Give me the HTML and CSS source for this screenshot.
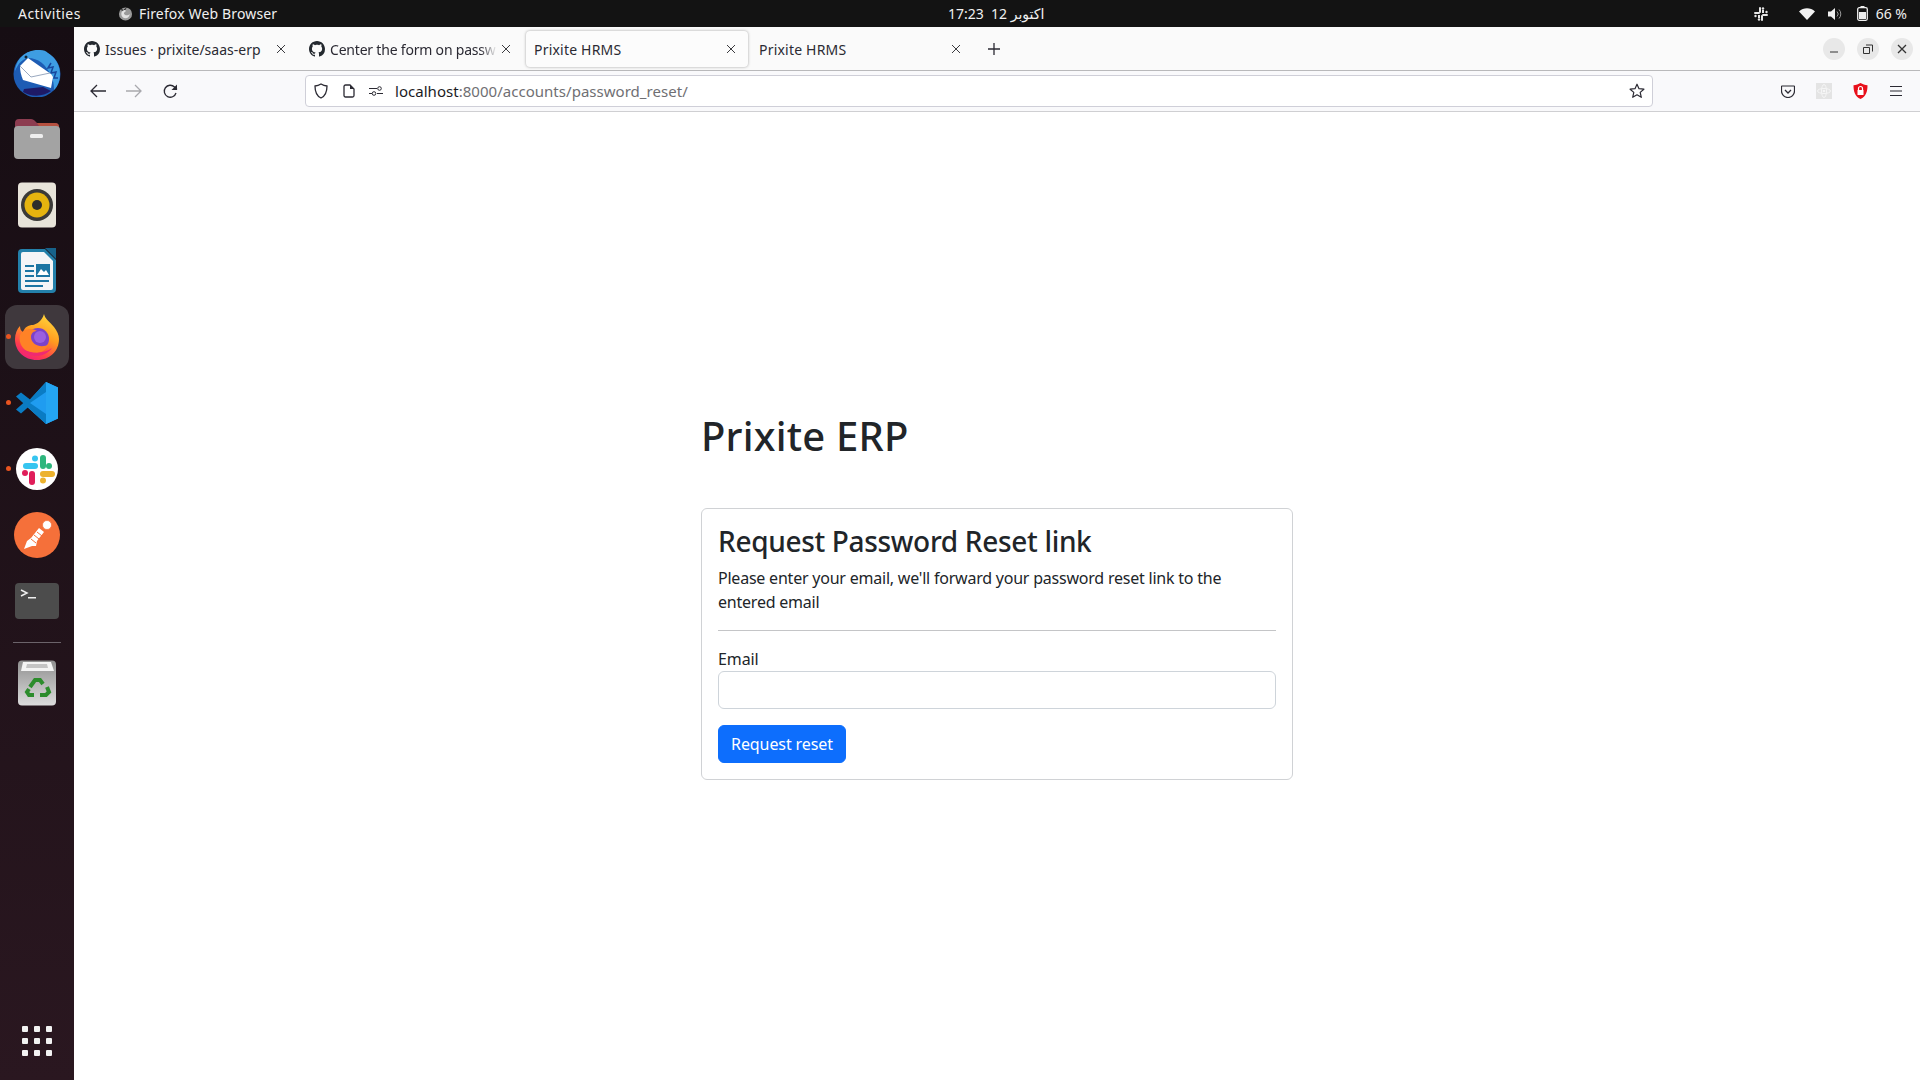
FILE: index.html
```html
<!DOCTYPE html>
<html lang="en">
<head>
<meta charset="utf-8">
<title>Prixite HRMS</title>
<link rel="stylesheet" href="styles.css">
</head>
<body>
<svg class="defs" width="0" height="0" aria-hidden="true">
  <symbol id="gh" viewBox="0 0 16 16"><path fill="#24292f" d="M8 0C3.58 0 0 3.58 0 8c0 3.54 2.29 6.53 5.47 7.59.4.07.55-.17.55-.38 0-.19-.01-.82-.01-1.49-2.01.37-2.53-.49-2.69-.94-.09-.23-.48-.94-.82-1.13-.28-.15-.68-.52-.01-.53.63-.01 1.08.58 1.23.82.72 1.21 1.87.87 2.33.66.07-.52.28-.87.51-1.07-1.78-.2-3.64-.89-3.64-3.95 0-.87.31-1.59.82-2.15-.08-.2-.36-1.02.08-2.12 0 0 .67-.21 2.2.82.64-.18 1.32-.27 2-.27s1.36.09 2 .27c1.53-1.04 2.2-.82 2.2-.82.44 1.1.16 1.92.08 2.12.51.56.82 1.27.82 2.15 0 3.07-1.87 3.75-3.65 3.95.29.25.54.73.54 1.48 0 1.07-.01 1.93-.01 2.2 0 .21.15.46.55.38A8.01 8.01 0 0 0 16 8c0-4.42-3.58-8-8-8z"/></symbol>
  <symbol id="x" viewBox="0 0 10 10"><path d="M1 1l8 8M9 1l-8 8" stroke="#3b3b3f" stroke-width="1" fill="none"/></symbol>
</svg>

<header class="topbar">
  <div class="top-left">
    <span class="top-activities">Activities</span>
    <svg class="top-fx" width="15" height="15" viewBox="0 0 16 16"><circle cx="8" cy="8.500" r="7" fill="#9a9a9a"/><path d="M8 4a4.500 4.500 0 1 0 4.500 4.500C11 10 8 10.500 6.500 8.500 6 7 7 6 8 6z" fill="#e2e2e2"/><path d="M3 1.500l2.500 3 3-2.500L10 0 8 4 4 5z" fill="#131313"/></svg>
    <span class="top-app">Firefox Web Browser</span>
  </div>
  <div class="top-clock">17:23&nbsp;&nbsp;12 اكتوبر</div>
  <div class="top-right">
    <svg class="st-slack" width="14" height="14" viewBox="0 0 14 14" fill="#e6e6e6"><rect x="0" y="5" width="6" height="2" rx="1"/><rect x="8" y="7" width="6" height="2" rx="1"/><rect x="5" y="0" width="2" height="6" rx="1"/><rect x="7" y="8" width="2" height="6" rx="1"/><circle cx="9" cy="1.500" r="1.200"/><circle cx="12.500" cy="5" r="1.200"/><circle cx="5" cy="12.500" r="1.200"/><circle cx="1.500" cy="9" r="1.200"/><rect x="8" y="3" width="2" height="3"/><rect x="4" y="8" width="2" height="3"/></svg>
    <svg class="st-wifi" width="16" height="12" viewBox="0 0 16 12"><path d="M8 12L0 3.500C4.500-.8 11.500-.8 16 3.500z" fill="#f2f2f2"/></svg>
    <svg class="st-vol" width="15" height="14" viewBox="0 0 15 14"><path d="M0 4.500h3L7 1v12L3 9.500H0z" fill="#f0f0f0"/><path d="M9 4.500a3.500 3.500 0 0 1 0 5M11 2.500a6.500 6.500 0 0 1 0 9" stroke="#9a9a9a" stroke-width="1" fill="none"/></svg>
    <svg class="st-bat" width="11" height="15" viewBox="0 0 11 15"><rect x="3.500" y="0" width="4" height="2" fill="#eee"/><rect x=".7" y="1.700" width="9.600" height="12.600" rx="1.500" fill="none" stroke="#eee" stroke-width="1.300"/><rect x="2" y="6" width="7" height="7" fill="#eee"/></svg>
    <span class="st-pct">66 %</span>
  </div>
</header>

<div class="desktop">
  <nav class="dock">
    <div class="dock-slot">
      <svg width="48" height="48" viewBox="0 0 48 48"><circle cx="24" cy="25" r="23.500" fill="#1d5cb4"/><path d="M2 22C3 10 13 0 27 1c4 .3 6 1 8 3 7 4 12 12 12 21 0 6-2 12-6 16 0-6-1-11-3-14C33 15 25 9 15 9 9 10 5 15 2 22z" fill="#3e9de2"/><path d="M38 14l-3 5 5-1-2 6 5-1-2 6 4 0" fill="none" stroke="#17479d" stroke-width="1.500"/><path d="M10 43c8 5 20 5 28-1l-8-4-19 2z" fill="#1e1a66"/><path d="M7 17l8-8 23 16 2 3-2 11-28-8c-2-5-3-9-3-14z" fill="#fff"/><path d="M7 17l11 11 19-4" fill="none" stroke="#9aa9c0" stroke-width="1"/><circle cx="13" cy="8" r="1.500" fill="#123"/></svg>
    </div>
    <div class="dock-slot">
      <svg width="46" height="42" viewBox="0 0 46 42"><path d="M1 5a4 4 0 0 1 4-4h12c2 0 3 1 4 2l2 2h18a4 4 0 0 1 4 4v6H1z" fill="#8c3c50"/><path d="M23 5h18a4 4 0 0 1 4 4v6H30z" fill="#b5503f"/><rect x="0" y="8" width="46" height="33" rx="4" fill="#a3a3a3"/><rect x="16" y="16" width="13" height="4" rx="1.500" fill="#eeeeee"/></svg>
    </div>
    <div class="dock-slot">
      <svg width="38" height="46" viewBox="0 0 38 46"><rect width="38" height="45" y=".5" rx="4" fill="#e8e4da"/><circle cx="19" cy="23" r="16" fill="#3b3a38"/><circle cx="19" cy="23" r="12.500" fill="#e6b40f"/><circle cx="19" cy="23" r="5" fill="#2e2d2b"/></svg>
    </div>
    <div class="dock-slot">
      <svg width="38" height="46" viewBox="0 0 38 46"><path d="M0 5a4 4 0 0 1 4-4h23l11 11v29a4 4 0 0 1-4 4H4a4 4 0 0 1-4-4z" fill="#2380aa"/><path d="M3 6a2 2 0 0 1 2-2h21l9 9v27a2 2 0 0 1-2 2H5a2 2 0 0 1-2-2z" fill="#f4f5f7"/><path d="M27 0h11v11z" fill="#17628a"/><path d="M7 17h9v2H7zM7 22h9v2H7zM7 27h9v2H7zM7 32h24v2H7zM7 37h18v2H7z" fill="#1c75a3"/><rect x="18" y="16" width="14" height="13" fill="#1c75a3"/><path d="M19 27l4-6 3 3 2-2 3 5z" fill="#fff"/></svg>
    </div>
    <div class="dock-slot dock-active">
      <span class="dock-dot"></span>
      <svg width="44" height="46" viewBox="0 0 44 46"><defs><linearGradient id="fxg" x1=".8" y1="0" x2=".3" y2="1"><stop offset="0" stop-color="#ffdc3e"/><stop offset=".45" stop-color="#ff9a1f"/><stop offset=".8" stop-color="#ff3d4d"/><stop offset="1" stop-color="#ee1f7a"/></linearGradient></defs><path d="M22 46C9 46 0 37 0 25c0-5 2-10 5-13 0 3 1 5 3 6 2-5 5-7 10-7 4-1 9-4 11-11 1 5 6 8 10 13 3 4 5 8 5 12 0 12-9 21-22 21z" fill="url(#fxg)"/><circle cx="23" cy="25" r="11" fill="#7b42c9"/><circle cx="25" cy="23" r="6" fill="#9a5fe0"/><path d="M5 21c3-6 12-8 17-4-3 0-6 2-6 6 0 8 11 12 18 7-3 7-10 10-16 9C9 38 3 30 5 21z" fill="#ff8226"/><path d="M7 35c6 9 22 10 30-1-8 6-20 6-30 1z" fill="#ef2a72"/></svg>
    </div>
    <div class="dock-slot">
      <span class="dock-dot"></span>
      <svg width="42" height="42" viewBox="0 0 42 42"><path d="M30 0l12 5.500v31L30 42 9 23z" fill="#1f9cf0"/><path d="M30 0v10L14 21l16 11v10L0 14.500l5-4 9 7z" fill="#0a7cc4"/><path d="M0 27.500l5 4 9-8-5-4z" fill="#0a7cc4"/><path d="M30 0l12 5.500v31L30 42z" fill="#24a5f2"/></svg>
    </div>
    <div class="dock-slot">
      <span class="dock-dot"></span>
      <svg width="42" height="42" viewBox="0 0 42 42"><circle cx="21" cy="21" r="21" fill="#fff"/><rect x="7" y="15" width="15" height="6" rx="3" fill="#36c5f0"/><circle cx="19" cy="10.500" r="3" fill="#36c5f0"/><rect x="24" y="7" width="6" height="14" rx="3" fill="#2eb67d"/><circle cx="33" cy="18" r="3" fill="#2eb67d"/><rect x="24" y="23" width="15" height="6" rx="3" fill="#ecb22e"/><circle cx="27" cy="32.500" r="3" fill="#ecb22e"/><rect x="13" y="23" width="6" height="14" rx="3" fill="#e01e5a"/><circle cx="9" cy="25" r="3" fill="#e01e5a"/></svg>
    </div>
    <div class="dock-slot">
      <svg width="46" height="46" viewBox="0 0 46 46"><circle cx="23" cy="23" r="23" fill="#f5703a"/><path d="M10 37l8-3 4 0 1-5 7-9-5-4-8 10-4 3z" fill="#fff"/><path d="M27 15l5 5" stroke="#f5703a" stroke-width="1"/><circle cx="33" cy="13" r="4.500" fill="#fff" stroke="#f5703a" stroke-width=".7"/><path d="M17 27l5 4M20 23l5 4M23 20l5 4" stroke="#f5703a" stroke-width="1"/></svg>
    </div>
    <div class="dock-slot">
      <svg width="44" height="36" viewBox="0 0 44 36"><rect width="44" height="36" rx="4" fill="#4c4c4c"/><path d="M6 7l6 3-6 3" stroke="#eee" stroke-width="1.500" fill="none"/><rect x="13" y="14" width="8" height="1.500" fill="#eee"/></svg>
    </div>
    <div class="dock-sep"></div>
    <div class="dock-slot">
      <svg width="38" height="46" viewBox="0 0 38 46"><defs><linearGradient id="trg" x1="0" y1="0" x2="0" y2="1"><stop offset="0" stop-color="#8f8f8f"/><stop offset="1" stop-color="#dcdcdc"/></linearGradient></defs><rect width="38" height="45" y=".5" rx="4" fill="url(#trg)"/><path d="M5 2h28l3 9H3z" fill="#f4f4f4"/><path d="M9 4h20l1 4H8z" fill="#c4c4c4"/><g fill="none" stroke="#2c8c2c" stroke-width="4"><path d="M12 27l5-7h5l3 4"/><path d="M29 27l2 5-3 3h-6"/><path d="M16 35h-5l-2-3 2-3"/></g></svg>
    </div>
    <div class="dock-apps">
      <i></i><i></i><i></i><i></i><i></i><i></i><i></i><i></i><i></i>
    </div>
  </nav>

  <div class="browser">
    <div class="tabstrip">
      <div class="tab">
        <svg class="fav" width="16" height="16"><use href="#gh"/></svg>
        <span class="tab-title">Issues · prixite/saas-erp</span>
        <svg class="tab-x" width="10" height="10"><use href="#x"/></svg>
      </div>
      <div class="tab">
        <svg class="fav" width="16" height="16"><use href="#gh"/></svg>
        <span class="tab-title tab-fade">Center the form on passw</span>
        <svg class="tab-x" width="10" height="10"><use href="#x"/></svg>
      </div>
      <div class="tab tab-on">
        <span class="tab-title tab-plain">Prixite HRMS</span>
        <svg class="tab-x" width="10" height="10"><use href="#x"/></svg>
      </div>
      <div class="tab">
        <span class="tab-title tab-plain">Prixite HRMS</span>
        <svg class="tab-x" width="10" height="10"><use href="#x"/></svg>
      </div>
      <svg class="tab-plus" width="14" height="14" viewBox="0 0 14 14"><path d="M7 1v12M1 7h12" stroke="#2b2a33" stroke-width="1.300"/></svg>
      <div class="winbtns">
        <span class="winbtn"><svg width="10" height="10" viewBox="0 0 10 10"><path d="M1 8h8" stroke="#333" stroke-width="1"/></svg></span>
        <span class="winbtn"><svg width="10" height="10" viewBox="0 0 10 10"><path d="M.5 3.500h6v6h-6zM3 1h6.500v6.500" fill="none" stroke="#333" stroke-width="1"/></svg></span>
        <span class="winbtn"><svg width="10" height="10" viewBox="0 0 10 10"><path d="M1 1l8 8M9 1l-8 8" stroke="#333" stroke-width="1.300"/></svg></span>
      </div>
    </div>
    <div class="toolbar">
      <svg class="tb-back" width="16" height="14" viewBox="0 0 16 14"><path d="M7 1L1 7l6 6M1 7h15" stroke="#2b2a33" stroke-width="1.300" fill="none"/></svg>
      <svg class="tb-fwd" width="16" height="14" viewBox="0 0 16 14"><path d="M9 1l6 6-6 6M15 7H0" stroke="#a9a9ad" stroke-width="1.300" fill="none"/></svg>
      <svg class="tb-reload" width="15" height="15" viewBox="0 0 15 15"><path d="M13 9a6 6 0 1 1-1.500-6L14 5.500" stroke="#2b2a33" stroke-width="1.300" fill="none"/><path d="M14 .5v5.500H8.500" fill="#2b2a33" stroke="none"/></svg>
      <div class="urlbar">
        <svg class="u-shield" width="14" height="16" viewBox="0 0 14 16"><path d="M7 1c2 1.200 4 1.800 6 2 0 6-1.500 10-6 12C2.500 13 1 9 1 3c2-.2 4-.8 6-2z" stroke="#2b2a33" stroke-width="1.300" fill="none"/></svg>
        <svg class="u-page" width="12" height="14" viewBox="0 0 12 14"><path d="M1 2.500A1.500 1.500 0 0 1 2.500 1H7l4 4v6.500a1.500 1.500 0 0 1-1.500 1.500h-7A1.500 1.500 0 0 1 1 11.500z" stroke="#2b2a33" stroke-width="1.300" fill="none"/><path d="M7 1v4h4" fill="#2b2a33"/></svg>
        <svg class="u-perm" width="14" height="10" viewBox="0 0 14 10"><path d="M0 2.500h8M0 7.500h3M8 7.500h6" stroke="#2b2a33" stroke-width="1"/><circle cx="10.500" cy="2.500" r="1.800" fill="none" stroke="#2b2a33"/><circle cx="5" cy="7.500" r="1.800" fill="none" stroke="#2b2a33"/></svg>
        <span class="u-text"><b>localhost</b>:8000/accounts/password_reset/</span>
        <svg class="u-star" width="16" height="16" viewBox="0 0 16 16"><path d="M8 1.200l2 4.500 4.900.5-3.700 3.200 1.100 4.900L8 11.800l-4.300 2.500 1.100-4.900L1.100 6.200 6 5.700z" stroke="#2b2a33" stroke-width="1.200" fill="none" stroke-linejoin="round"/></svg>
      </div>
      <svg class="tb-pocket" width="14" height="13" viewBox="0 0 14 13"><path d="M1 1h12a.5.500 0 0 1 .5.500V6a6.500 6.500 0 0 1-13 0V1.500A.5.500 0 0 1 1 1z" stroke="#2b2a33" stroke-width="1.200" fill="none"/><path d="M4 5l3 3 3-3" stroke="#2b2a33" stroke-width="1.300" fill="none"/></svg>
      <svg class="tb-ext" width="16" height="16" viewBox="0 0 16 16"><rect width="16" height="16" fill="#e4e4e4"/><g fill="none" stroke="#f6f6f6"><ellipse cx="8" cy="8" rx="6.500" ry="2.500"/><ellipse cx="8" cy="8" rx="2.500" ry="6.500"/></g><circle cx="8" cy="8" r="1.300" fill="#f6f6f6"/></svg>
      <svg class="tb-ublock" width="15" height="16" viewBox="0 0 15 16"><path d="M7.500 0c2 1.300 4.500 2 7 2.200 0 6.500-1.500 11-7 13.800C2 13.200.5 8.700.5 2.200 3 2 5.500 1.300 7.500 0z" fill="#e8101b"/><rect x="4.500" y="7" width="6" height="5" fill="#fff"/><path d="M5.500 7V5.500a2 2 0 0 1 4 0V7" stroke="#fff" fill="none" stroke-width="1.200"/></svg>
      <svg class="tb-menu" width="12" height="10" viewBox="0 0 12 10"><path d="M0 .5h12M0 5h12M0 9.500h12" stroke="#2b2a33" stroke-width="1.100"/></svg>
    </div>
    <main class="page">
      <div class="wrap">
        <h1 class="brand">Prixite ERP</h1>
        <section class="card">
          <h3 class="card-title">Request Password Reset link</h3>
          <p class="card-text">Please enter your email, we'll forward your password reset link to the entered email</p>
          <hr class="rule">
          <label class="lbl" for="email">Email</label>
          <input class="field" id="email" type="email">
          <button class="btn" type="button">Request reset</button>
        </section>
      </div>
    </main>
  </div>
</div>
</body>
</html>
```
FILE: styles.css
```css
* { box-sizing: border-box; }
html, body { margin: 0; height: 100%; }
body {
  width: 1920px; height: 1080px; overflow: hidden;
  display: flex; flex-direction: column;
  font-family: "Noto Sans", "DejaVu Sans", sans-serif;
  background: #fff; color: #212529;
}
.defs { position: absolute; }

/* GNOME top bar */
.topbar {
  height: 27px; flex: none; background: #131313; color: #f0f0f0;
  display: grid; grid-template-columns: 948px auto 1fr; align-items: center;
  font-size: 14px;
}
.top-left { display: flex; align-items: center; padding-left: 18px; }
.top-activities { width: 100px; letter-spacing: .45px; }
.top-app { letter-spacing: .15px; }
.top-fx { margin-right: 6px; }
.top-clock { font-size: 14px; white-space: pre; letter-spacing: .2px; }
.top-right { display: flex; align-items: center; justify-content: flex-end; padding-right: 13px; }
.st-wifi { margin-left: 31px; }
.st-vol { margin-left: 13px; }
.st-bat { margin-left: 14px; }
.st-pct { margin-left: 8px; }

.desktop { flex: 1; display: flex; min-height: 0; }

/* Dock */
.dock {
  width: 74px; flex: none; padding: 13px 0 24px;
  background: linear-gradient(180deg, #160d13 0%, #2a1720 100%);
  display: flex; flex-direction: column; align-items: center;
}
.dock-slot { position: relative; width: 64px; height: 66px; flex: none; display: flex; align-items: center; justify-content: center; }
.dock-active::before { content: ""; position: absolute; inset: 1px 0; border-radius: 12px; background: #3f383d; }
.dock-active svg { position: relative; }
.dock-dot { position: absolute; left: 1px; top: 30px; width: 5px; height: 5px; border-radius: 50%; background: #e95420; z-index: 1; }
.dock-sep { width: 48px; height: 1px; margin: 8px 0 7px; background: #6b636a; flex: none; }
.dock-apps { margin-top: auto; display: grid; grid-template-columns: repeat(3, 6px); gap: 6px; }
.dock-apps i { width: 6px; height: 6px; border-radius: 1px; background: #f2f2f2; }

/* Browser */
.browser { flex: 1; min-width: 0; display: flex; flex-direction: column; }
.tabstrip {
  height: 44px; flex: none; background: #fafafa; border-bottom: 1px solid #b9b9bb;
  display: flex; align-items: center; padding-left: 2px;
  font-size: 14px; color: #2b2a33;
}
.tab {
  width: 223px; height: 36px; margin-right: 2px; flex: none; padding: 1px 13px 0 8px;
  display: flex; align-items: center; border-radius: 4px;
}
.tab-on { background: #fcfcfc; box-shadow: 0 0 3px rgba(0,0,0,.35); width: 222px; margin-right: 3px; padding-right: 12px; }
.fav { flex: none; margin-right: 5px; }
.tab-title { flex: 1; min-width: 0; white-space: nowrap; overflow: hidden; }
.tab-plain { letter-spacing: .2px; }
.tab-fade { letter-spacing: -.2px; -webkit-mask-image: linear-gradient(90deg, #000 90%, transparent 100%); mask-image: linear-gradient(90deg, #000 90%, transparent 100%); }
.tab-x { flex: none; margin-left: 4px; }
.tab-plus { margin-left: 11px; flex: none; }
.winbtns { margin-left: auto; display: flex; gap: 12px; padding-right: 7px; }
.winbtn { width: 22px; height: 22px; border-radius: 50%; background: #e8e8e8; display: flex; align-items: center; justify-content: center; }

.toolbar {
  height: 41px; flex: none; background: #f9f9fb; border-bottom: 1px solid #cfcfd2;
  display: flex; align-items: center;
}
.tb-back { margin-left: 16px; }
.tb-fwd { margin-left: 20px; }
.tb-reload { margin-left: 21px; margin-right: 127px; }
.urlbar {
  width: 1348px; height: 32px; flex: none;
  background: #fff; border: 1px solid #cfcfd8; border-radius: 4px;
  display: flex; align-items: center; padding: 0 7px 0 8px;
}
.u-page { margin-left: 15px; }
.u-perm { margin-left: 14px; }
.u-text { margin-left: 12px; flex: 1; font-size: 15px; color: #6f6f73; white-space: nowrap; letter-spacing: .03px; }
.u-text b { font-weight: 400; color: #1b1b1f; }
.tb-pocket { margin-left: 128px; }
.tb-ext { margin-left: 21px; }
.tb-ublock { margin-left: 21px; }
.tb-menu { margin-left: 22px; }

/* Page content */
.page { flex: 1; min-height: 0; display: flex; align-items: center; justify-content: center; background: #fff; }
.wrap { width: 592px; }
.brand { margin: 0 0 48px; font-size: 40px; line-height: 48px; font-weight: 500; letter-spacing: .2px; }
.card { border: 1px solid #d0d2d5; border-radius: 6px; padding: 16px; display: flex; flex-direction: column; align-items: flex-start; }
.card-title { margin: 0 0 8px; font-size: 28px; line-height: 33px; font-weight: 500; letter-spacing: -.32px; }
.card-text { margin: 0 0 16px; font-size: 16px; line-height: 24px; letter-spacing: -.22px; }
.rule { width: 100%; height: 1px; margin: 0 0 16px; border: 0; background: #c4c5c7; }
.lbl { font-size: 16px; line-height: 24px; letter-spacing: -.1px; }
.field { width: 100%; height: 38px; margin: 0 0 16px; border: 1px solid #ced4da; border-radius: 6px; background: #fff; }
.btn { width: 128px; height: 38px; padding: 0; border: 1px solid #0d6efd; border-radius: 6px; background: #0d6efd; color: #fff; font: inherit; font-size: 16px; letter-spacing: -.1px; }
```
